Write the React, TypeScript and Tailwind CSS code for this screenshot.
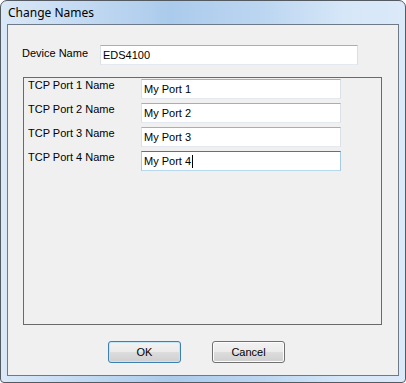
const font = { fontFamily: '"Liberation Sans", Arial, sans-serif' };

const TextBox: React.FC<{ value: string; focused?: boolean; className?: string }> = ({
  value,
  focused,
  className = '',
}) => (
  <div
    className={`h-[20px] flex items-center pl-[2px] text-[11px] leading-[13px] text-black bg-white border ${
      focused
        ? 'border-[#a4c9e3] border-t-[#3d7bad] border-b-[#b7d9ed]'
        : 'border-[#dbdfe6] border-t-[#abadb3] border-b-[#e3e9ef]'
    } ${className}`}
  >
    <span className="pt-[1px]">{value}</span>
    {focused && <span className="ml-[1px] w-[1px] h-[13px] bg-black" />}
  </div>
);

const Button: React.FC<{ label: string; isDefault?: boolean }> = ({ label, isDefault }) => (
  <div
    className={`w-[73px] h-[22px] flex items-center justify-center rounded-[3px] border text-[11px] text-black bg-[linear-gradient(to_bottom,#f2f2f2_0%,#ebebeb_50%,#dddddd_51%,#cfcfcf_100%)] ${
      isDefault
        ? 'border-[#3c7fb1] shadow-[inset_0_0_0_1px_#c4e5f6]'
        : 'border-[#707070] shadow-[inset_0_0_0_1px_#fcfcfc]'
    }`}
  >
    {label}
  </div>
);

const ports = ['My Port 1', 'My Port 2', 'My Port 3', 'My Port 4'];

const App: React.FC = () => {
  return (
    <div className="w-[406px] h-[383px] bg-white">
      <div className="w-[406px] h-[383px] flex flex-col border border-[#545a62] rounded-t-[7px] rounded-b-[4px] px-[6px] pb-[6px] bg-[linear-gradient(to_right,#dae8f7_0%,#c3daf2_20%,#abcbec_42%,#bcd6f1_65%,#d6e7f8_85%,#dbe9f8_100%)]">
        <div
          className="h-[23px] flex items-center pl-[1px] text-[12px] text-black"
          style={{ fontFamily: '"Noto Sans", "Open Sans", sans-serif' }}
        >
          Change Names
        </div>
        <div className="flex-1 flex flex-col border border-[#6e7a88] bg-[#f0f0f0]" style={font}>
          <div className="flex items-start mt-[20px] ml-[14px]">
            <div className="w-[78px] mt-[2px] text-[11px] leading-[13px] text-black">Device Name</div>
            <TextBox value="EDS4100" className="w-[258px]" />
          </div>
          <div className="mt-[12px] ml-[15px] w-[359px] h-[248px] border border-[#6a6a6a] pt-[1px] pl-[4px] flex flex-col gap-[4px]">
            {ports.map((p, i) => (
              <div key={p} className="flex items-start">
                <div className="w-[113px] text-[11px] leading-[13px] text-black">
                  TCP Port {i + 1} Name
                </div>
                <TextBox value={p} focused={i === 3} className="w-[200px]" />
              </div>
            ))}
          </div>
          <div className="mt-[16px] flex gap-[31px] ml-[100px]">
            <Button label="OK" isDefault />
            <Button label="Cancel" />
          </div>
        </div>
      </div>
    </div>
  );
};

export default App;
